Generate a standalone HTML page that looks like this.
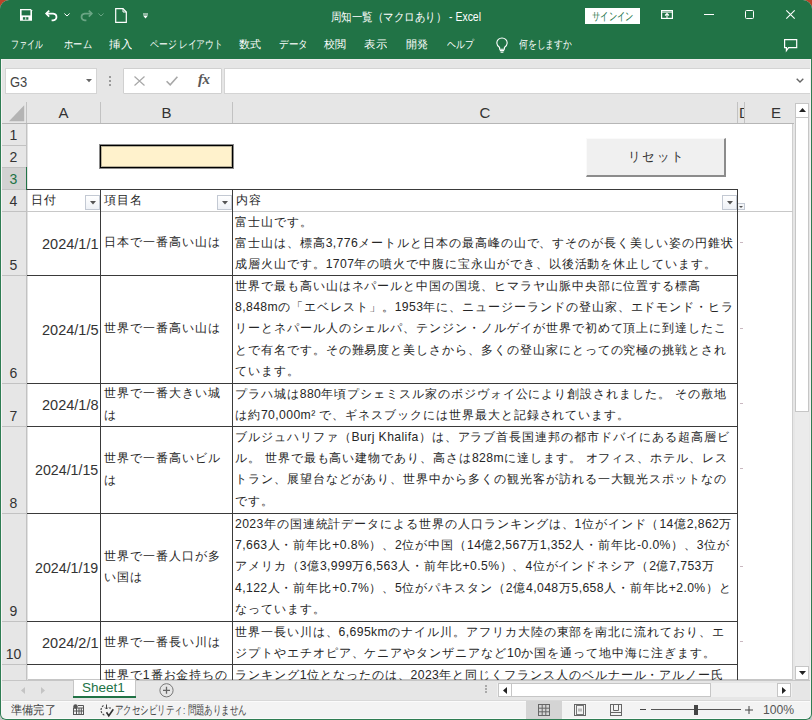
<!DOCTYPE html><html lang="ja"><head><meta charset="utf-8"><style>
*{box-sizing:border-box;margin:0;padding:0}
html,body{width:812px;height:720px;overflow:hidden;background:linear-gradient(#bb4429 50%,#c4c4c4 50%)}
body{position:relative;font-family:"Liberation Sans",sans-serif;color:#262626}
div{position:absolute;white-space:nowrap}
svg{position:absolute;overflow:visible}
.tb{color:#fff;font-size:12px;line-height:14px}
.ln{font-size:12.2px;line-height:21.4px;height:21.4px;letter-spacing:0.95px}
.rh{left:1px;width:25px;text-align:center;font-size:14px;color:#333}
.ch{top:100.5px;height:23px;line-height:23px;text-align:center;font-size:15px;color:#333}
.lt{letter-spacing:0.4px}
.fb{width:15px;height:15px;border:1px solid #c3c9d3;background:linear-gradient(#fff,#eef1f6)}
</style></head><body>
<div style="left:0;top:0;width:812px;height:720px;background:#e6e6e6;border-radius:9px 9px 6px 6px;overflow:hidden">
<div style="left:0;top:0;width:812px;height:59px;background:#217346"></div>
<svg style="left:20px;top:9px" width="12" height="12" viewBox="0 0 12 12"><path d="M0 0H10.8L12 1.2V11.8H0Z" fill="#ffffff"/><rect x="1.6" y="1.3" width="8.8" height="5.1" fill="#217346"/><rect x="2.9" y="8.2" width="5.5" height="2.5" fill="#217346"/><rect x="5.3" y="8.2" width="0.9" height="2.5" fill="#ffffff"/></svg>
<svg style="left:45px;top:10px" width="14" height="11" viewBox="0 0 14 11"><path d="M1.2 3.6H8.2A4 3.4 0 0 1 8.2 10.3H6.6" fill="none" stroke="#ffffff" stroke-width="1.7"/><path d="M4.2 0.6L1.2 3.6L4.2 6.6" fill="none" stroke="#ffffff" stroke-width="1.7"/></svg>
<svg style="left:64px;top:13px" width="6" height="4" viewBox="0 0 6 4"><path d="M0.4 0.5L3 3L5.6 0.5" fill="none" stroke="#ffffff" stroke-width="1"/></svg>
<svg style="left:79px;top:10px" width="14" height="11" viewBox="0 0 14 11"><path d="M12.8 3.6H5.8A4 3.4 0 0 0 5.8 10.3H7.4" fill="none" stroke="#6aa584" stroke-width="1.7"/><path d="M9.8 0.6L12.8 3.6L9.8 6.6" fill="none" stroke="#6aa584" stroke-width="1.7"/></svg>
<svg style="left:98px;top:13px" width="6" height="4" viewBox="0 0 6 4"><path d="M0.4 0.5L3 3L5.6 0.5" fill="none" stroke="#6aa584" stroke-width="1"/></svg>
<svg style="left:115px;top:8px" width="12" height="15" viewBox="0 0 12 15"><path d="M0.7 0.7H8L11.3 4V14.3H0.7Z" fill="none" stroke="#ffffff" stroke-width="1.2"/><path d="M8 0.7V4H11.3" fill="none" stroke="#ffffff" stroke-width="1"/></svg>
<svg style="left:143px;top:13px" width="5" height="6" viewBox="0 0 5 6"><rect x="0" y="0.5" width="5" height="1" fill="#ffffff"/><path d="M0 2.6H5L2.5 5.4Z" fill="#ffffff"/></svg>
<div id="title" class="tb" style="left:331.00px;transform:scaleX(0.8721);transform-origin:0 0;top:10px;font-size:12px">周知一覧（マクロあり） - Excel</div>
<div style="left:585px;top:8px;width:55px;height:16px;background:#fff"></div>
<div id="signin" style="left:592.43px;transform:scaleX(0.7547);transform-origin:0 0;top:8px;color:#217346;font-size:11px;line-height:16px">サインイン</div>
<svg style="left:661px;top:10px" width="12" height="9" viewBox="0 0 12 9"><rect x="0.6" y="0.6" width="10.8" height="7.8" fill="none" stroke="#ffffff" stroke-width="1.2"/><rect x="0.6" y="1.6" width="10.8" height="1" fill="#ffffff"/><path d="M6 3.5V8.4M4 5.5L6 3.5L8 5.5" fill="none" stroke="#ffffff" stroke-width="1.1"/></svg>
<div style="left:704px;top:14px;width:10px;height:1px;background:#fff"></div>
<div style="left:745px;top:10px;width:9px;height:9px;border:1px solid #fff;border-radius:1.5px"></div>
<svg style="left:786px;top:10px" width="9" height="9" viewBox="0 0 9 9"><path d="M0.3 0.3L8.7 8.7M8.7 0.3L0.3 8.7" stroke="#ffffff" stroke-width="1.1"/></svg>
<div id="tab0" class="tb" style="left:11.47px;transform:scaleX(0.7209);transform-origin:0 0;top:37px;font-size:11px">ファイル</div>
<div id="tab1" class="tb" style="left:64.00px;transform:scaleX(0.8438);transform-origin:0 0;top:37px;font-size:11px">ホーム</div>
<div id="tab2" class="tb" style="left:109.00px;transform:scaleX(1.0455);transform-origin:0 0;top:37px;font-size:11px">挿入</div>
<div id="tab3" class="tb" style="left:150.00px;transform:scaleX(0.7978);transform-origin:0 0;top:37px;font-size:11px">ページ レイアウト</div>
<div id="tab4" class="tb" style="left:239.00px;transform:scaleX(1.0000);transform-origin:0 0;top:37px;font-size:11px">数式</div>
<div id="tab5" class="tb" style="left:279.00px;transform:scaleX(0.8710);transform-origin:0 0;top:37px;font-size:11px">データ</div>
<div id="tab6" class="tb" style="left:324.00px;transform:scaleX(1.0000);transform-origin:0 0;top:37px;font-size:11px">校閲</div>
<div id="tab7" class="tb" style="left:364.00px;transform:scaleX(1.0455);transform-origin:0 0;top:37px;font-size:11px">表示</div>
<div id="tab8" class="tb" style="left:406.00px;transform:scaleX(1.0000);transform-origin:0 0;top:37px;font-size:11px">開発</div>
<div id="tab9" class="tb" style="left:447.00px;transform:scaleX(0.8182);transform-origin:0 0;top:37px;font-size:11px">ヘルプ</div>
<div id="tab10" class="tb" style="left:519.00px;transform:scaleX(0.8030);transform-origin:0 0;top:37px;font-size:11px">何をしますか</div>
<svg style="left:496px;top:38px" width="12" height="15" viewBox="0 0 12 15"><path d="M3.6 9.5C2 8.3 0.8 6.8 0.8 5A5.2 5 0 0 1 11.2 5C11.2 6.8 10 8.3 8.4 9.5V11.3H3.6Z" fill="none" stroke="#ffffff" stroke-width="1.1"/><path d="M3.8 12.6H8.2M4.6 14.2H7.4" stroke="#ffffff" stroke-width="1.1"/></svg>
<svg style="left:784px;top:39px" width="14" height="13" viewBox="0 0 14 13"><path d="M0.6 0.6H12.7V8.6H4.6L2.4 11.6V8.6H0.6Z" fill="none" stroke="#ffffff" stroke-width="1.2"/></svg>
<div style="left:1px;top:59px;width:810px;height:1px;background:#ededed"></div>
<div style="left:5px;top:68px;width:92px;height:26px;background:#fff;border:1px solid #d4d4d4"></div>
<div id="g3" style="left:10.00px;transform:scaleX(0.8947);transform-origin:0 0;top:74px;font-size:14.5px;line-height:16px;color:#444">G3</div>
<svg style="left:86px;top:79px" width="6" height="4" viewBox="0 0 6 4"><path d="M0 0H6L3 3.2Z" fill="#666"/></svg>
<div style="left:109px;top:76px;width:2px;height:2px;background:#9a9a9a"></div>
<div style="left:109px;top:80px;width:2px;height:2px;background:#9a9a9a"></div>
<div style="left:109px;top:84px;width:2px;height:2px;background:#9a9a9a"></div>
<div style="left:123px;top:68px;width:99px;height:26px;background:#fff;border:1px solid #d0d0d0;border-radius:1px"></div>
<svg style="left:134px;top:76px" width="11" height="10" viewBox="0 0 11 10"><path d="M0.5 0.5L10.5 9.5M10.5 0.5L0.5 9.5" stroke="#a8a8a8" stroke-width="1.2"/></svg>
<svg style="left:166px;top:76px" width="12" height="10" viewBox="0 0 12 10"><path d="M0.6 5.2L4.2 8.8L11.4 0.8" fill="none" stroke="#a8a8a8" stroke-width="1.6"/></svg>
<div style="left:198px;top:70px;font-family:'Liberation Serif',serif;font-style:italic;font-weight:bold;font-size:15px;line-height:18px;color:#595959;letter-spacing:-0.5px">fx</div>
<div style="left:224px;top:68px;width:587px;height:26px;background:#fff;border:1px solid #d4d4d4"></div>
<svg style="left:796px;top:78px" width="8" height="5" viewBox="0 0 8 5"><path d="M0.7 0.7L4 4L7.3 0.7" fill="none" stroke="#666" stroke-width="1.4"/></svg>
<div style="left:1px;top:100px;width:793px;height:24px;background:#e6e6e6;border-bottom:1px solid #b6b6b6"></div>
<div style="left:1px;top:124px;width:26px;height:556px;background:#e6e6e6;border-right:1px solid #c2c2c2"></div>
<svg style="left:9px;top:104.5px" width="16" height="17" viewBox="0 0 16 17"><path d="M15.2 0.3V16.2H0Z" fill="#b4b4b4"/></svg>
<div style="left:27px;top:124px;width:766px;height:556px;background:#fff;border-right:1px solid #cfcfcf;border-bottom:1px solid #c6c6c6"></div>
<div style="left:27px;top:124px;width:1px;height:556px;background:#e2e2e2"></div>
<div style="left:26px;top:102px;width:1px;height:21px;background:#c2c2c2"></div>
<div style="left:100px;top:102px;width:1px;height:21px;background:#c2c2c2"></div>
<div style="left:232px;top:102px;width:1px;height:21px;background:#c2c2c2"></div>
<div style="left:737px;top:102px;width:1px;height:21px;background:#c2c2c2"></div>
<div style="left:744px;top:102px;width:1px;height:21px;background:#c2c2c2"></div>
<div class="ch" style="left:27px;width:73px">A</div>
<div class="ch" style="left:101px;width:131px">B</div>
<div class="ch" style="left:233px;width:504px">C</div>
<div class="ch" style="left:745px;width:62px">E</div>
<div class="ch" style="left:739px;width:5px;overflow:hidden;text-align:left">D</div>
<div style="left:1px;top:145px;width:26px;height:1px;background:#c2c2c2"></div>
<div class="rh" style="top:126.5px;line-height:16px;color:#333">1</div>
<div style="left:1px;top:167px;width:26px;height:1px;background:#c2c2c2"></div>
<div class="rh" style="top:148.5px;line-height:16px;color:#333">2</div>
<div style="left:1px;top:168px;width:25px;height:21px;background:#d2d2d2"></div>
<div style="left:1px;top:189px;width:26px;height:1px;background:#c2c2c2"></div>
<div class="rh" style="top:170.5px;line-height:16px;color:#217346">3</div>
<div style="left:1px;top:211px;width:26px;height:1px;background:#c2c2c2"></div>
<div class="rh" style="top:192.5px;line-height:16px;color:#333">4</div>
<div style="left:1px;top:275px;width:26px;height:1px;background:#c2c2c2"></div>
<div class="rh" style="top:256.5px;line-height:16px;color:#333">5</div>
<div style="left:1px;top:383px;width:26px;height:1px;background:#c2c2c2"></div>
<div class="rh" style="top:364.5px;line-height:16px;color:#333">6</div>
<div style="left:1px;top:426px;width:26px;height:1px;background:#c2c2c2"></div>
<div class="rh" style="top:407.5px;line-height:16px;color:#333">7</div>
<div style="left:1px;top:513px;width:26px;height:1px;background:#c2c2c2"></div>
<div class="rh" style="top:494.5px;line-height:16px;color:#333">8</div>
<div style="left:1px;top:621px;width:26px;height:1px;background:#c2c2c2"></div>
<div class="rh" style="top:602.5px;line-height:16px;color:#333">9</div>
<div style="left:1px;top:664px;width:26px;height:1px;background:#c2c2c2"></div>
<div class="rh" style="top:645.5px;line-height:16px;color:#333">10</div>
<div style="left:26px;top:167px;width:1px;height:23px;background:#217346"></div>
<div style="left:99px;top:144px;width:135px;height:25px;border:1px solid #8a8a8a"></div>
<div style="left:100px;top:145px;width:133px;height:23px;background:#fff2cc;border:1px solid #000"></div>
<div style="left:101px;top:146px;width:131px;height:21px;border:1px solid #b8b096"></div>
<div style="left:586px;top:138px;width:140px;height:39px;background:#f0f0f0;border-right:2px solid #8c8c8c;border-bottom:2px solid #8c8c8c;border-top:1px solid #fafafa;border-left:1px solid #fafafa"></div>
<div id="reset" style="left:628.22px;transform:scaleX(0.9615);transform-origin:0 0;top:148px;font-size:13px;line-height:18px;letter-spacing:2px;color:#333">リセット</div>
<div class="ln" style="left:31px;top:189px;line-height:22px">日付</div>
<div class="ln" style="left:104px;top:189px;line-height:22px">項目名</div>
<div class="ln" style="left:236px;top:189px;line-height:22px">内容</div>
<div class="fb" style="left:85px;top:195px"></div>
<svg style="left:90px;top:201px" width="6" height="4"><path d="M0 0H6L3 3.5Z" fill="#555"/></svg>
<div class="fb" style="left:217px;top:195px"></div>
<svg style="left:222px;top:201px" width="6" height="4"><path d="M0 0H6L3 3.5Z" fill="#555"/></svg>
<div class="fb" style="left:722px;top:195px"></div>
<svg style="left:727px;top:201px" width="6" height="4"><path d="M0 0H6L3 3.5Z" fill="#555"/></svg>
<div style="left:737px;top:203px;width:8px;height:7px;border:1px solid #c3c9d3;background:#f4f6f9"></div>
<svg style="left:739px;top:206px" width="4" height="2"><path d="M0 0H4L2 2Z" fill="#555"/></svg>
<div style="left:27px;top:211px;width:766px;height:1px;background:#c8c8c8"></div>
<div id="date0" style="left:42.00px;transform:scaleX(1.0370);transform-origin:0 0;top:235.5px;font-size:14px;line-height:16px;color:#333">2024/1/1</div>
<div class="ln" style="left:104px;top:232.3px">日本で一番高い山は</div>
<div class="ln" style="left:235px;top:211.5px;">富士山です。</div>
<div class="ln" style="left:235px;top:232.9px;">富士山は、標高<span class="lt">3,776</span>メートルと日本の最高峰の山で、すそのが長く美しい姿の円錐状</div>
<div class="ln" style="left:235px;top:254.3px;">成層火山です。<span class="lt">1707</span>年の噴火で中腹に宝永山ができ、以後活動を休止しています。</div>
<div id="date1" style="left:42.00px;transform:scaleX(1.0370);transform-origin:0 0;top:321.5px;font-size:14px;line-height:16px;color:#333">2024/1/5</div>
<div class="ln" style="left:104px;top:318.3px">世界で一番高い山は</div>
<div class="ln" style="left:235px;top:275.5px;">世界で最も高い山はネパールと中国の国境、ヒマラヤ山脈中央部に位置する標高</div>
<div class="ln" style="left:235px;top:296.9px;"><span class="lt">8,848m</span>の「エベレスト」。<span class="lt">1953</span>年に、ニュージーランドの登山家、エドモンド・ヒラ</div>
<div class="ln" style="left:235px;top:318.3px;">リーとネパール人のシェルパ、テンジン・ノルゲイが世界で初めて頂上に到達したこ</div>
<div class="ln" style="left:235px;top:339.7px;">とで有名です。その難易度と美しさから、多くの登山家にとっての究極の挑戦とされ</div>
<div class="ln" style="left:235px;top:361.1px;">ています。</div>
<div id="date2" style="left:42.00px;transform:scaleX(1.0370);transform-origin:0 0;top:397.0px;font-size:14px;line-height:16px;color:#333">2024/1/8</div>
<div class="ln" style="left:104px;top:383.1px">世界で一番大きい城</div>
<div class="ln" style="left:104px;top:404.5px">は</div>
<div class="ln" style="left:235px;top:383.5px;">プラハ城は<span class="lt">880</span>年頃プシェミスル家のボジヴォイ公により創設されました。<span class="lt"> </span>その敷地</div>
<div class="ln" style="left:235px;top:404.9px;">は約<span class="lt">70,000m² </span>で、ギネスブックには世界最大と記録されています。</div>
<div id="date3" style="left:35.00px;transform:scaleX(1.0161);transform-origin:0 0;top:462.0px;font-size:14px;line-height:16px;color:#333">2024/1/15</div>
<div class="ln" style="left:104px;top:448.1px">世界で一番高いビル</div>
<div class="ln" style="left:104px;top:469.5px">は</div>
<div class="ln" style="left:235px;top:426.5px;">ブルジュハリファ（<span class="lt">Burj Khalifa</span>）は、アラブ首長国連邦の都市ドバイにある超高層ビ</div>
<div class="ln" style="left:235px;top:447.9px;">ル。<span class="lt"> </span>世界で最も高い建物であり、高さは<span class="lt">828m</span>に達します。<span class="lt"> </span>オフィス、ホテル、レス</div>
<div class="ln" style="left:235px;top:469.3px;">トラン、展望台などがあり、世界中から多くの観光客が訪れる一大観光スポットなの</div>
<div class="ln" style="left:235px;top:490.7px;">です。</div>
<div id="date4" style="left:35.00px;transform:scaleX(1.0161);transform-origin:0 0;top:559.5px;font-size:14px;line-height:16px;color:#333">2024/1/19</div>
<div class="ln" style="left:104px;top:545.6px">世界で一番人口が多</div>
<div class="ln" style="left:104px;top:567.0px">い国は</div>
<div class="ln" style="left:235px;top:513.5px;"><span class="lt">2023</span>年の国連統計データによる世界の人口ランキングは、<span class="lt">1</span>位がインド（<span class="lt">14</span>億<span class="lt">2,862</span>万</div>
<div class="ln" style="left:235px;top:534.9px;"><span class="lt">7,663</span>人・前年比<span class="lt">+0.8%</span>）、<span class="lt">2</span>位が中国（<span class="lt">14</span>億<span class="lt">2,567</span>万<span class="lt">1,352</span>人・前年比<span class="lt">-0.0%</span>）、<span class="lt">3</span>位が</div>
<div class="ln" style="left:235px;top:556.3px;">アメリカ（<span class="lt">3</span>億<span class="lt">3,999</span>万<span class="lt">6,563</span>人・前年比<span class="lt">+0.5%</span>）、<span class="lt">4</span>位がインドネシア（<span class="lt">2</span>億<span class="lt">7,753</span>万</div>
<div class="ln" style="left:235px;top:577.7px;"><span class="lt">4,122</span>人・前年比<span class="lt">+0.7%</span>）、<span class="lt">5</span>位がパキスタン（<span class="lt">2</span>億<span class="lt">4,048</span>万<span class="lt">5,658</span>人・前年比<span class="lt">+2.0%</span>）と</div>
<div class="ln" style="left:235px;top:599.1px;">なっています。</div>
<div id="date5" style="left:42.00px;transform:scaleX(1.0370);transform-origin:0 0;top:635.0px;font-size:14px;line-height:16px;color:#333">2024/2/1</div>
<div class="ln" style="left:104px;top:631.8px">世界で一番長い川は</div>
<div class="ln" style="left:235px;top:621.5px;">世界一長い川は、<span class="lt">6,695km</span>のナイル川。アフリカ大陸の東部を南北に流れており、エ</div>
<div class="ln" style="left:235px;top:642.9px;">ジプトやエチオピア、ケニアやタンザニアなど<span class="lt">10</span>か国を通って地中海に注ぎます。</div>
<div class="ln" style="left:104px;top:664.5px">世界で1番お金持ちの</div>
<div class="ln" style="left:235px;top:664.5px;">ランキング<span class="lt">1</span>位となったのは、<span class="lt">2023</span>年と同じくフランス人のベルナール・アルノー氏</div>
<div style="left:27px;top:189px;width:711px;height:1px;background:#3a3a3a"></div>
<div style="left:100px;top:189px;width:1px;height:491px;background:#3a3a3a"></div>
<div style="left:232px;top:189px;width:1px;height:491px;background:#3a3a3a"></div>
<div style="left:737px;top:189px;width:1px;height:491px;background:#3a3a3a"></div>
<div style="left:27px;top:275px;width:711px;height:1px;background:#3a3a3a"></div>
<div style="left:27px;top:383px;width:711px;height:1px;background:#3a3a3a"></div>
<div style="left:27px;top:426px;width:711px;height:1px;background:#3a3a3a"></div>
<div style="left:27px;top:513px;width:711px;height:1px;background:#3a3a3a"></div>
<div style="left:27px;top:621px;width:711px;height:1px;background:#3a3a3a"></div>
<div style="left:27px;top:664px;width:711px;height:1px;background:#3a3a3a"></div>
<div style="left:740px;top:242px;width:3px;height:1px;background:#c9b8c0"></div>
<div style="left:740px;top:328px;width:3px;height:1px;background:#c9b8c0"></div>
<div style="left:740px;top:403px;width:3px;height:1px;background:#c9b8c0"></div>
<div style="left:740px;top:468px;width:3px;height:1px;background:#c9b8c0"></div>
<div style="left:740px;top:566px;width:3px;height:1px;background:#c9b8c0"></div>
<div style="left:740px;top:641px;width:3px;height:1px;background:#c9b8c0"></div>
<div style="left:794px;top:100px;width:17px;height:580px;background:#e6e6e6"></div>
<div style="left:795px;top:117px;width:14px;height:549px;background:#ebebeb"></div>
<div style="left:795px;top:103px;width:14px;height:15px;background:#fff;border:1px solid #c6c6c6"></div>
<svg style="left:799px;top:108px" width="7" height="4"><path d="M0 4H7L3.5 0Z" fill="#222"/></svg>
<div style="left:795px;top:117px;width:14px;height:295px;background:#fff;border:1px solid #c6c6c6"></div>
<div style="left:795px;top:666px;width:14px;height:14px;background:#fff;border:1px solid #c6c6c6"></div>
<svg style="left:799px;top:671px" width="7" height="4"><path d="M0 0H7L3.5 4Z" fill="#222"/></svg>
<div style="left:1px;top:680px;width:810px;height:21px;background:#e6e6e6;border-top:1px solid #c6c6c6"></div>
<svg style="left:21px;top:687px" width="4" height="7"><path d="M4 0V7L0 3.5Z" fill="#c4c4c4"/></svg>
<svg style="left:41px;top:687px" width="4" height="7"><path d="M0 0V7L4 3.5Z" fill="#c4c4c4"/></svg>
<div style="left:73px;top:680px;width:63px;height:18px;background:#fff;border-left:1px solid #c6c6c6;border-right:1px solid #c6c6c6"></div>
<div style="left:73px;top:696px;width:63px;height:2px;background:#217346"></div>
<div id="sheet1" style="left:82.00px;transform:scaleX(1.0000);transform-origin:0 0;top:680px;font-size:13.5px;line-height:16px;color:#217346">Sheet1</div>
<svg style="left:159px;top:683px" width="15" height="15" viewBox="0 0 15 15"><circle cx="7.5" cy="7.3" r="6.6" fill="none" stroke="#777" stroke-width="1"/><path d="M7.5 3.8V10.8M4 7.3H11" stroke="#666" stroke-width="1.3"/></svg>
<div style="left:485px;top:685px;width:2px;height:2px;background:#aaa"></div>
<div style="left:485px;top:688px;width:2px;height:2px;background:#aaa"></div>
<div style="left:485px;top:691px;width:2px;height:2px;background:#aaa"></div>
<div style="left:497px;top:683px;width:295px;height:14px;background:#f0f0f0"></div>
<div style="left:498px;top:683px;width:14px;height:14px;background:#fff;border:1px solid #c6c6c6"></div>
<svg style="left:503px;top:687px" width="4" height="7"><path d="M4 0V7L0 3.5Z" fill="#222"/></svg>
<div style="left:511px;top:683px;width:200px;height:14px;background:#fff;border:1px solid #c6c6c6"></div>
<div style="left:777px;top:683px;width:14px;height:14px;background:#fff;border:1px solid #c6c6c6"></div>
<svg style="left:782px;top:687px" width="4" height="7"><path d="M0 0V7L4 3.5Z" fill="#222"/></svg>
<div style="left:1px;top:700px;width:810px;height:20px;background:#f3f3f3;border-top:1px solid #d8d8d8"></div>
<div style="left:1px;top:701px;width:810px;height:1px;background:#fbfbfb"></div>
<div style="left:1px;top:718px;width:810px;height:1px;background:#fbfbfb"></div>
<div id="ready" style="left:11.00px;transform:scaleX(0.9348);transform-origin:0 0;top:702px;font-size:11.5px;line-height:16px;color:#444">準備完了</div>
<svg style="left:73px;top:704px" width="11" height="11" viewBox="0 0 11 11"><circle cx="2.5" cy="2.5" r="2.2" fill="#555"/><rect x="0.5" y="4" width="10" height="6.5" fill="none" stroke="#555" stroke-width="1"/><path d="M3.5 4V10.5M6 4V10.5M8.3 4V10.5M0.5 7H10.5M5 1.5H10.5V4" fill="none" stroke="#555" stroke-width="1"/></svg>
<svg style="left:100px;top:704px" width="14" height="13" viewBox="0 0 14 13"><path d="M3.5 1.5A5.5 5.5 0 0 0 5.5 11.5" fill="none" stroke="#444" stroke-width="1.1" stroke-dasharray="2 1.2"/><path d="M6.5 0.5V5M5 3.5L6.5 5L8 3.5M9 4H11" fill="none" stroke="#444" stroke-width="1"/><path d="M6.5 8.3L8.8 11.8L13.3 5.3" fill="none" stroke="#333" stroke-width="1.6"/></svg>
<div id="acc" style="left:115.49px;transform:scaleX(0.7081);transform-origin:0 0;top:702px;font-size:11.5px;line-height:16px;color:#444">アクセシビリティ: 問題ありません</div>
<div style="left:526px;top:701px;width:36px;height:18px;background:#d4d4d4"></div>
<svg style="left:538px;top:704px" width="12" height="12" viewBox="0 0 12 12"><rect x="0.5" y="0.5" width="11" height="11" fill="none" stroke="#666"/><path d="M4.2 0.5V11.5M7.8 0.5V11.5M0.5 4.2H11.5M0.5 7.8H11.5" stroke="#666"/></svg>
<svg style="left:574px;top:704px" width="12" height="12" viewBox="0 0 12 12"><rect x="0.5" y="0.5" width="11" height="11" fill="none" stroke="#666"/><rect x="2.5" y="1.5" width="7" height="9" fill="none" stroke="#777"/><rect x="4" y="4.5" width="4" height="3" fill="#bbb"/></svg>
<svg style="left:610px;top:704px" width="12" height="12" viewBox="0 0 12 12"><rect x="0.5" y="0.5" width="11" height="11" fill="none" stroke="#666"/><path d="M3.5 0.5V6.5H8.5V0.5M0.5 8.5H11.5" fill="none" stroke="#666"/></svg>
<div style="left:640px;top:709px;width:6px;height:1px;background:#444"></div>
<div style="left:651px;top:709px;width:90px;height:1px;background:#555"></div>
<div style="left:694px;top:705px;width:4px;height:10px;background:#444"></div>
<svg style="left:745px;top:706px" width="8" height="8"><path d="M4 0V8M0 4H8" stroke="#444" stroke-width="1"/></svg>
<div id="zoom" style="left:763.11px;transform:scaleX(0.9375);transform-origin:0 0;top:702px;font-size:13px;line-height:16px;color:#555">100%</div>
<div style="left:1px;top:59px;width:1px;height:660px;background:#f7f4f5"></div>
<div style="left:810px;top:59px;width:1px;height:660px;background:#f4f1f2"></div>
</div>
<div style="left:0;top:59px;width:812px;height:661px;border:1px solid #2f7d53;border-top:0;border-radius:0 0 6px 6px"></div>
</body></html>
